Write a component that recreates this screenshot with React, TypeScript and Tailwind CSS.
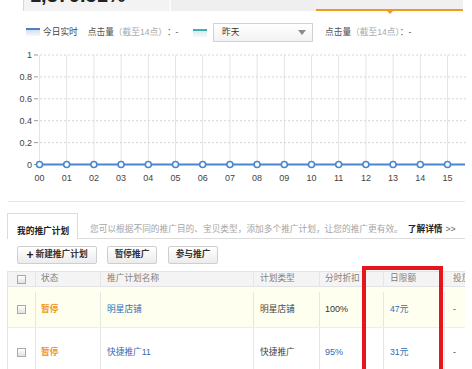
import React from "react";

const xs = Array.from({ length: 17 }, (_, i) => 39.5 + 27.2 * i);
const yLevels = [0, 0.2, 0.4, 0.6, 0.8, 1];
const yOf = (v: number) => 164.5 - v * 109.5;

function Checkbox() {
  return (
    <div className="w-[9px] h-[9px] border border-[#a9a9a9] bg-gradient-to-b from-white to-[#e2e2e2]" />
  );
}

function Chart() {
  return (
    <svg width={472} height={159} viewBox="0 42 472 159" className="block">
      {xs.filter((x) => x < 466).map((x, i) => (
        <line key={"v" + i} x1={x} y1={55} x2={x} y2={164.5} stroke="#e3e3e3" strokeWidth={1} />
      ))}
      {yLevels.slice(1).map((v) => (
        <line
          key={"h" + v}
          x1={40}
          y1={yOf(v)}
          x2={466}
          y2={yOf(v)}
          stroke="#d6d6d6"
          strokeWidth={1}
          strokeDasharray="2 2"
        />
      ))}
      {yLevels.map((v) => (
        <g key={"t" + v}>
          <line x1={34} y1={yOf(v)} x2={38} y2={yOf(v)} stroke="#999" strokeWidth={1} />
          <text
            x={32}
            y={yOf(v) + 3.2}
            textAnchor="end"
            fontSize={9}
            fill="#444"
            fontFamily="Liberation Sans, sans-serif"
          >
            {v === 0 ? "0" : v === 1 ? "1" : v.toFixed(1)}
          </text>
        </g>
      ))}
      <line x1={39.5} y1={164.5} x2={465} y2={164.5} stroke="#4a86d0" strokeWidth={2} />
      {xs.filter((x) => x < 466).map((x, i) => (
        <circle key={"c" + i} cx={x} cy={164.5} r={3} fill="#fff" stroke="#4a86d0" strokeWidth={1.6} />
      ))}
      {xs.slice(0, 16).map((x, i) => (
        <text
          key={"x" + i}
          x={x}
          y={181}
          textAnchor="middle"
          fontSize={9}
          fill="#444"
          fontFamily="Liberation Sans, sans-serif"
        >
          {String(i).padStart(2, "0")}
        </text>
      ))}
    </svg>
  );
}

export default function App() {
  const cell = "border-r border-[#e6e6e6] flex items-center";
  return (
    <div className="relative w-[472px] h-[369px] overflow-hidden bg-white font-['Liberation_Sans','Noto_Sans_CJK_SC',sans-serif] text-[8.7px] text-[#333]">
      {/* top strip */}
      <div className="flex h-[11px] ml-[23px] w-[440px]">
        <div className="w-[146px] bg-[#f3f3f3] border-l border-[#d6d6d6] overflow-hidden pl-[6px]">
          <div className="mt-[-15px] text-[20px] leading-[20px] font-bold text-[#222] whitespace-nowrap">
            1,379.51%
          </div>
        </div>
        <div className="w-[147px] bg-[#efefef] border-l-2 border-[#fafafa]" />
        <div className="relative flex-1 bg-[#f0f0f0] border-b-2 border-[#f39a1e]">
          <div className="absolute left-[69px] top-[9px] w-0 h-0 border-l-[5px] border-r-[5px] border-t-[5px] border-l-transparent border-r-transparent border-t-[#f39a1e]" />
        </div>
      </div>

      {/* legend row */}
      <div className="flex items-center h-[19px] mt-[12px] pl-[26px] whitespace-nowrap">
        <div className="w-[167px] flex items-center">
          <div className="w-[14px] h-[8px] border-t-2 border-[#4d7fc4] bg-gradient-to-b from-[#d3def0] to-[#f6f8fc]" />
          <span className="ml-[3px] text-[#444]">今日实时</span>
          <span className="ml-[10px] text-[#555]">点击量</span>
          <span className="text-[#aaa]">（截至14点）</span>
          <span className="text-[#555]">：-</span>
        </div>
        <div className="w-[14px] h-[8px] border-t-2 border-[#3fb0b0] bg-gradient-to-b from-[#d5ecec] to-[#f6fbfb]" />
        <div className="ml-[6px] w-[100px] h-[19px] border border-[#d2d2d2] bg-gradient-to-b from-white to-[#f2f2f2] flex items-center justify-between pl-[8px] pr-[6px]">
          <span className="text-[#333]">昨天</span>
          <div className="w-0 h-0 border-l-[4.5px] border-r-[4.5px] border-t-[5px] border-l-transparent border-r-transparent border-t-[#8a8a8a]" />
        </div>
        <div className="ml-[12px]">
          <span className="text-[#555]">点击量</span>
          <span className="text-[#aaa]">（截至14点）</span>
          <span className="text-[#555]">：-</span>
        </div>
      </div>

      {/* chart */}
      <Chart />

      {/* separator */}
      <div className="ml-[8px] w-[457px] border-t border-[#e8e8e8]" />

      {/* tabs */}
      <div className="mt-[11px] ml-[7px] w-[458px] h-[26px] flex border-b border-[#dcdcdc] whitespace-nowrap">
        <div className="w-[71px] h-[26px] border border-b-0 border-[#dcdcdc] bg-white pl-[9px] pt-[11px] leading-[12px] font-bold text-[#222] -mb-px">
          我的推广计划
        </div>
        <div className="ml-[12px] pt-[10px] leading-[12px] flex">
          <span className="text-[#a5a5a5]">
            您可以根据不同的推广目的、宝贝类型，添加多个推广计划，让您的推广更有效。
          </span>
          <span className="ml-[5px] font-bold text-[#222]">了解详情</span>
          <span className="ml-[3px] text-[#666]">&gt;&gt;</span>
        </div>
      </div>

      {/* buttons */}
      <div className="mt-[7px] flex h-[18px] whitespace-nowrap">
        <div className="ml-[17px] w-[80px] h-[18px] border border-[#cfcfcf] rounded-[2px] bg-gradient-to-b from-white to-[#ececec] flex items-center justify-center font-bold text-[#333]">
          <span className="text-[12px] leading-none mr-[2px] text-[#222]">+</span>
          新建推广计划
        </div>
        <div className="ml-[10px] w-[50px] h-[18px] border border-[#cfcfcf] rounded-[2px] bg-gradient-to-b from-white to-[#ececec] flex items-center justify-center font-bold text-[#333]">
          暂停推广
        </div>
        <div className="ml-[11px] w-[50px] h-[18px] border border-[#cfcfcf] rounded-[2px] bg-gradient-to-b from-white to-[#ececec] flex items-center justify-center font-bold text-[#333]">
          参与推广
        </div>
      </div>

      {/* table */}
      <div className="mt-[7px] ml-[7px] w-[458px] overflow-hidden border-l border-[#e3e3e3] whitespace-nowrap">
        <div className="w-[465px]">
          <div className="grid grid-cols-[28px_65px_153px_66px_64px_61px_1fr] h-[16px] bg-[#f4f4f4] border-y border-[#e3e3e3] text-[#808080]">
            <div className={cell + " justify-center"}>
              <Checkbox />
            </div>
            <div className={cell + " pl-[5px]"}>状态</div>
            <div className={cell + " pl-[6px]"}>推广计划名称</div>
            <div className={cell + " pl-[6px]"}>计划类型</div>
            <div className={cell + " pl-[5px]"}>分时折扣</div>
            <div className={cell + " pl-[6px]"}>日限额</div>
            <div className="flex items-center pl-[8px]">投放</div>
          </div>
          <div className="grid grid-cols-[28px_65px_153px_66px_64px_61px_1fr] h-[41px] pt-[5px] bg-[#fffff0] border-b border-[#ededed]">
            <div className={cell + " justify-center"}>
              <Checkbox />
            </div>
            <div className={cell + " pl-[5px] font-bold text-[#f0961e]"}>暂停</div>
            <div className={cell + " pl-[6px] text-[#2f6cb5]"}>明星店铺</div>
            <div className={cell + " pl-[6px] text-[#444]"}>明星店铺</div>
            <div className={cell + " pl-[5px] text-[9px] text-[#333]"}>100%</div>
            <div className={cell + " pl-[6px] text-[#2f6cb5]"}>47元</div>
            <div className="flex items-center pl-[8px] text-[#444]">-</div>
          </div>
          <div className="grid grid-cols-[28px_65px_153px_66px_64px_61px_1fr] h-[49px] bg-white">
            <div className={cell + " justify-center"}>
              <Checkbox />
            </div>
            <div className={cell + " pl-[5px] font-bold text-[#f0961e]"}>暂停</div>
            <div className={cell + " pl-[6px] text-[#2f6cb5]"}>快捷推广11</div>
            <div className={cell + " pl-[6px] text-[#444]"}>快捷推广</div>
            <div className={cell + " pl-[5px] text-[9px] text-[#2f6cb5]"}>95%</div>
            <div className={cell + " pl-[6px] text-[#2f6cb5]"}>31元</div>
            <div className="flex items-center pl-[8px] text-[#444]">-</div>
          </div>
        </div>
      </div>

      {/* red highlight box */}
      <div className="absolute left-[362px] top-[266px] w-[81px] h-[120px] border-[4px] border-[#e8141b]" />
    </div>
  );
}
